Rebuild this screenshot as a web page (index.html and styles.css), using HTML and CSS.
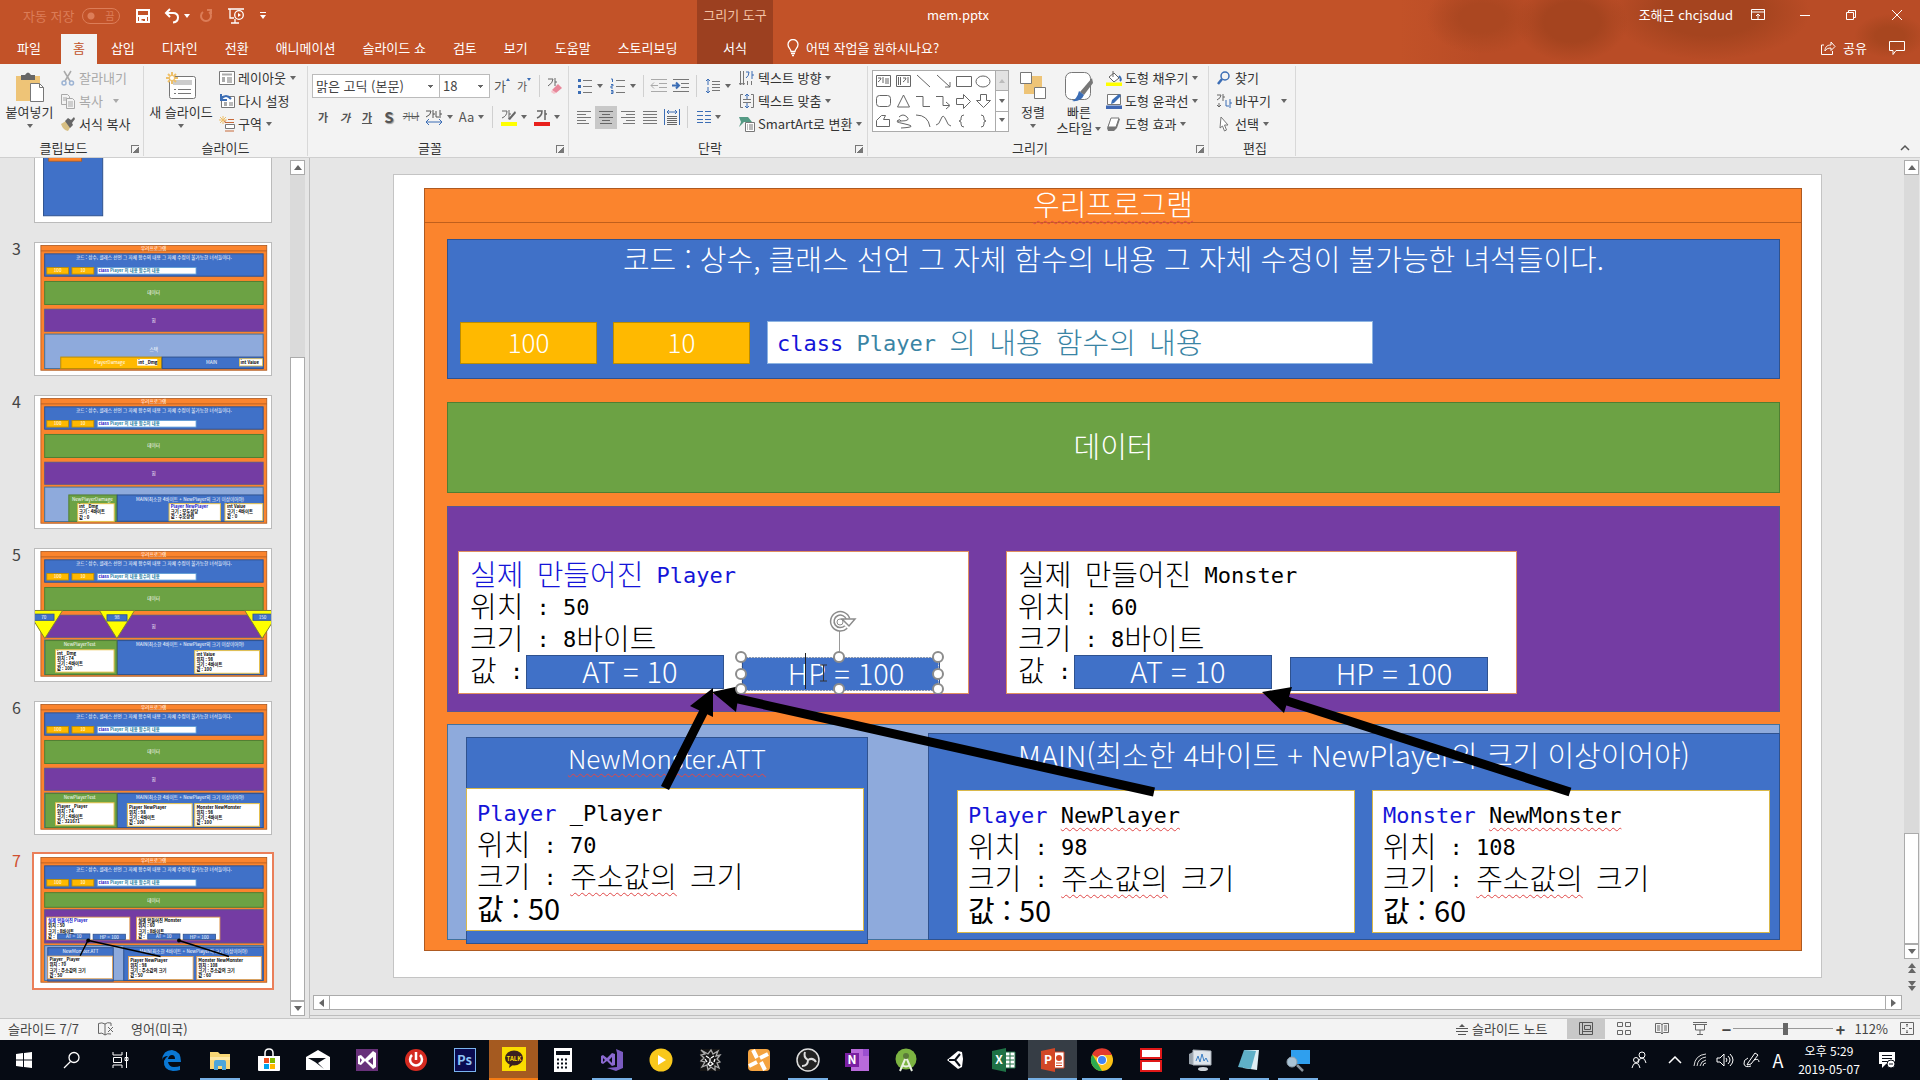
FILE: index.html
```html
<!DOCTYPE html>
<html lang="ko">
  <head>
    <meta charset="UTF-8" />
    <meta name="viewport" content="width=device-width, initial-scale=1.0" />
    <title>mem.pptx</title>
    <link rel="stylesheet" href="styles.css">
  </head>
  <body>
    <!-- Shared thumbnail art -->
    <svg class="defs" width="0" height="0" aria-hidden="true">
      <defs>
        <g id="th-base">
          <rect x="32" y="15" width="1374" height="759" fill="#fb842d" stroke="#ae5a21" stroke-width="5" />
          <path d="M32 48H1406" stroke="#ae5a21" stroke-width="5" />
          <rect x="55" y="66" width="1329" height="136" fill="#4071c8" stroke="#2f528f" stroke-width="6" />
          <g fill="#ffb900" stroke="#bc8c00" stroke-width="5">
            <rect x="68" y="149" width="132" height="40" />
            <rect x="221" y="149" width="133" height="40" />
          </g>
          <rect x="375" y="149" width="601" height="40" fill="#fff" stroke="#5b9bd5" stroke-width="5" />
          <g class="th-text">
            <text x="718" y="41">우리프로그램</text>
            <text x="720" y="96">코드 : 상수, 클래스 선언 그 자체 함수의 내용 그 자체 수정이 불가능한 녀석들이다.</text>
            <text x="134" y="179">100</text>
            <text x="287" y="179">10</text>
          </g>
          <text class="th-code" x="382" y="179" fill="#2b7fa5"><tspan fill="#1010c8">class</tspan> Player 의 내용 함수의 내용</text>
        </g>
        <g id="th-areas">
          <rect x="55" y="234" width="1329" height="140" fill="#6ca244" stroke="#507e32" stroke-width="6" />
          <rect x="55" y="403" width="1329" height="134" fill="#743ca3" stroke="#5a5590" stroke-width="6" />
          <rect x="55" y="554" width="1329" height="210" fill="#8eaadc" stroke="#41719c" stroke-width="6" />
          <text class="th-text" x="718" y="312">데이터</text>
          <text class="th-text" x="718" y="480">힙</text>
        </g>
        <g id="th-main">
          <rect x="497" y="557" width="887" height="207" fill="#4071c8" stroke="#2f528f" stroke-width="6" />
          <text class="th-text" x="940" y="590">MAIN(최소한 4바이트 + NewPlayer의 크기 이상이어야)</text>
        </g>
      </defs>
    </svg>

    <header class="titlebar">
      <div class="quick-access">
        <label class="autosave">자동 저장
          <input type="checkbox" class="autosave-box" />
          <span class="autosave-switch">끔</span>
        </label>
        <button class="qa-btn" aria-label="저장">
          <svg width="16" height="16" viewBox="0 0 16 16" fill="none" stroke="#fff" stroke-width="2"><path d="M2 2h12v12H2z" /><path d="M3 8h10M5 14v-4h6v4" /><path d="M6 12h1v2" stroke-width="1" /></svg>
        </button>
        <button class="qa-btn" aria-label="실행 취소">
          <svg width="16" height="16" viewBox="0 0 16 16" fill="none" stroke="#fff" stroke-width="2"><path d="M6 1L2 5l4 4" /><path d="M2 5h7q5 0 5 4.500t-5 5" /></svg>
          <span class="caret white"></span>
        </button>
        <button class="qa-btn dim" aria-label="다시 실행">
          <svg width="16" height="16" viewBox="0 0 16 16" fill="none" stroke="#dc7d58" stroke-width="2"><path d="M5 4a5 5 0 1 0 6 0" /><path d="M9 2h4v4" /></svg>
        </button>
        <button class="qa-btn" aria-label="처음부터">
          <svg width="18" height="16" viewBox="0 0 18 16" fill="none" stroke="#fff" stroke-width="1.300"><path d="M1 1h16M3 1v9h4M4 15h8M8 11v4" /><circle cx="12" cy="7" r="4.300" /><path d="M11 5l3 2-3 2z" fill="#fff" stroke="none" /></svg>
        </button>
        <button class="qa-btn" aria-label="빠른 실행 도구 모음 사용자 지정">
          <svg width="10" height="8" viewBox="0 0 10 8"><path d="M2 0h6v1H2zM2 3h6L5 7z" fill="#fff" /></svg>
        </button>
      </div>
      <div class="context-title">그리기 도구</div>
      <div class="title-right">
        <span class="file-name">mem.pptx</span>
        <div class="window-controls">
          <span class="account">조해근 chcjsdud</span>
          <button aria-label="리본 메뉴 표시 옵션"><svg width="14" height="12" viewBox="0 0 14 12" fill="none" stroke="#fff"><path d="M.5.5h13v10H.5zM.5 3h13M7 10V5M5 7l2-2 2 2" /></svg></button>
          <button aria-label="최소화"><svg width="12" height="12" viewBox="0 0 12 12" stroke="#fff"><path d="M1 6.500h10" /></svg></button>
          <button aria-label="이전 크기로 복원"><svg width="12" height="12" viewBox="0 0 12 12" fill="none" stroke="#fff"><path d="M1.500 3.500h7v7h-7zM3.500 3.500v-2h7v7h-2" /></svg></button>
          <button aria-label="닫기"><svg width="12" height="12" viewBox="0 0 12 12" stroke="#fff"><path d="M1 1l10 10M11 1L1 11" /></svg></button>
        </div>
      </div>

      <nav class="tabs">
        <button>파일</button>
        <button class="active">홈</button>
        <button>삽입</button>
        <button>디자인</button>
        <button>전환</button>
        <button>애니메이션</button>
        <button>슬라이드 쇼</button>
        <button>검토</button>
        <button>보기</button>
        <button>도움말</button>
        <button>스토리보딩</button>
      </nav>
      <button class="context-tab">서식</button>
      <div class="tabs-right">
        <button class="tell-me">
          <svg width="12" height="18" viewBox="0 0 12 18" fill="none" stroke="#fff" stroke-width="1.300"><path d="M4 12.500c0-3-3-3-3-7a5 5 0 0 1 10 0c0 4-3 4-3 7zM4 14.500h4M5 16.500h2" /></svg>
          어떤 작업을 원하시나요?
        </button>
        <button class="share">
          <svg width="15" height="14" viewBox="0 0 15 14" fill="none" stroke="#fff"><path d="M3 4H.500v9.500h11V10M4 10c0-4 2-6 6-6V1l4 4.500-4 4V7C7 7 5 8 4 10z" /></svg>
          공유
        </button>
        <button class="comment" aria-label="메모"><svg width="16" height="14" viewBox="0 0 16 14" fill="none" stroke="#fff"><path d="M.500.500h15v9H7l-3 4v-4H.500z" /></svg></button>
      </div>
    </header>

    <section class="ribbon">
      <div class="group g-clipboard">
        <div class="group-body">
          <button class="big">
            <svg width="30" height="32" viewBox="0 0 30 32"><path d="M1 5h24v25H1z" fill="#eec477" /><path d="M6 4h4q3-5 6 0h4v5H6z" fill="#666" /><path d="M15.500 12.500h9l4 4v14h-13z" fill="#fff" stroke="#777" /><path d="M24.500 12.500v4h4" fill="none" stroke="#777" /></svg>
            <span>붙여넣기</span><span class="caret"></span>
          </button>
          <div class="small-col">
            <button class="small off"><svg width="16" height="16" viewBox="0 0 16 16" fill="none" stroke="#a9a9a9" stroke-width="1.500"><path d="M4 1l6 10M11 1L5 11" /><circle cx="4" cy="13" r="2" stroke="#9db4d4" /><circle cx="11.500" cy="13" r="2" stroke="#9db4d4" /></svg>잘라내기</button>
            <button class="small off"><svg width="16" height="16" viewBox="0 0 16 16" fill="#f3f3f3" stroke="#a9a9a9"><path d="M1.500 1.500h6l2 2v8h-8zM3 5h4M3 7h4" /><path d="M6.500 5.500h6l2 2v8h-8zM8 9h5M8 11h5M8 13h5" /></svg>복사<span class="caret wide"></span></button>
            <button class="small"><svg width="16" height="16" viewBox="0 0 16 16"><path d="M1 8l5-3 5 5-3 5q-5-1-7-7z" fill="#d7bf83" /><path d="M5 5l3-3 3 2 3-3 1 2-3 4 1 2-3 3z" fill="#666" /></svg>서식 복사</button>
          </div>
        </div>
        <div class="group-foot"><span>클립보드</span><button class="launcher" aria-label="클립보드 옵션"></button></div>
      </div>

      <div class="group g-slides">
        <div class="group-body">
          <button class="big">
            <svg width="32" height="32" viewBox="0 0 32 32"><rect x="4.500" y="5.500" width="26" height="22" rx="2" fill="#fff" stroke="#777" /><path d="M8 9h19v5H8z" fill="#ccc" /><path d="M9 18.500h2M13 18.500h13M9 22.500h2M13 22.500h13" stroke="#777" /><path d="M7 1v12M1 7h12M3 3l8 8M11 3l-8 8" stroke="#eec06a" stroke-width="2" /><circle cx="7" cy="7" r="2" fill="#fff" /></svg>
            <span>새 슬라이드</span><span class="caret"></span>
          </button>
          <div class="small-col">
            <button class="small"><svg width="16" height="16" viewBox="0 0 16 16" fill="none" stroke="#777"><path d="M.500 1.500h15v13H.500z" fill="#fff" /><path d="M3 4.500h10" stroke-width="2" stroke="#aaa" /><path d="M3 7h3v5H3z" fill="#aaa" stroke="none" /><path d="M8 8h5M8 10h5M8 12h5" /></svg>레이아웃<span class="caret"></span></button>
            <button class="small"><svg width="16" height="16" viewBox="0 0 16 16" fill="none" stroke="#777"><path d="M2.500 3.500h13v11h-13z" fill="#fff" /><path d="M5 9h3v4H5z" fill="#aaa" stroke="none" /><path d="M10 10h4M10 12h4" /><path d="M2 1v6h6M2 6q5-6 10 0" stroke="#3b6db5" stroke-width="2" /></svg>다시 설정</button>
            <button class="small"><svg width="16" height="16" viewBox="0 0 16 16" fill="none"><path d="M4 0v8M0 4h8M1 1l6 6M7 1L1 7" stroke="#eec06a" /><path d="M9 3.500h6M15 6.500H6v-2M6 15h9" stroke="#c76a3a" /><path d="M6.500 8.500h9v4h-9z" fill="#fff" stroke="#777" /></svg>구역<span class="caret"></span></button>
          </div>
        </div>
        <div class="group-foot"><span>슬라이드</span></div>
      </div>

      <div class="group g-font">
        <div class="group-body rows">
          <div class="tool-row">
            <select class="font-name" aria-label="글꼴"><option>맑은 고딕 (본문)</option></select>
            <select class="font-size" aria-label="글꼴 크기"><option>18</option></select>
            <button class="tool" aria-label="글꼴 크기 크게">가<i class="tip up"></i></button>
            <button class="tool sm" aria-label="글꼴 크기 작게">가<i class="tip down"></i></button>
            <span class="sep"></span>
            <button class="tool" aria-label="모든 서식 지우기"><svg width="18" height="18" viewBox="0 0 18 18"><path d="M2 2h5q0 4-5 7M9 1v8M9 5h2" fill="none" stroke="#666" /><path d="M6 13l6-6 4 4-6 5z" fill="#e8879a" /><path d="M6 13l4 3-2 1-3-2z" fill="#f5c3cb" /></svg></button>
          </div>
          <div class="tool-row indent">
            <button class="tool sm bold">가</button>
            <button class="tool sm bold italic">가</button>
            <button class="tool sm bold under">가</button>
            <button class="tool shadow">S</button>
            <button class="tool xs strike">가나</button>
            <button class="tool split"><svg width="18" height="16" viewBox="0 0 18 16" fill="none"><path d="M1 2h5q0 4-5 6M8 1v8M8 5h2M11 2v6h3M15 1v8M15 5h2" stroke="#555" /><path d="M1 13h16M4 10l-3 3 3 3M14 10l3 3-3 3" stroke="#3b6db5" /></svg><span class="caret"></span></button>
            <button class="tool split">Aa<span class="caret"></span></button>
            <span class="sep"></span>
            <button class="tool split" aria-label="텍스트 강조 색"><svg width="16" height="18" viewBox="0 0 16 18"><path d="M1 3h5q0 5-5 7M8 2v9M8 6h2" fill="none" stroke="#666" /><path d="M7 11l7-8 1 2-6 7z" fill="#666" /><path d="M0 14h16v4H0z" fill="#ff0" /></svg><span class="caret"></span></button>
            <button class="tool split" aria-label="글꼴 색"><svg width="16" height="18" viewBox="0 0 16 18"><path d="M3 3h5q0 5-5 7M11 2v10M11 6h2" fill="none" stroke="#666" stroke-width="1.500" /><path d="M0 14h16v4H0z" fill="#e8201c" /></svg><span class="caret"></span></button>
          </div>
        </div>
        <div class="group-foot"><span>글꼴</span><button class="launcher" aria-label="글꼴 옵션"></button></div>
      </div>

      <div class="group g-paragraph">
        <div class="group-body">
          <div class="rows">
            <div class="tool-row">
              <button class="tool split" aria-label="글머리 기호"><svg width="16" height="16" viewBox="0 0 16 16"><path d="M1 1h3v3H1zM1 7h3v3H1zM1 13h3v3H1z" fill="#3b6db5" /><path d="M6 2.500h9M6 8.500h9M6 14.500h9" stroke="#777" /></svg><span class="caret"></span></button>
              <button class="tool split" aria-label="번호 매기기"><svg width="16" height="16" viewBox="0 0 16 16" fill="none"><path d="M1 1h1.500v3M1 6.500h2v1.500H1v2h2M1 12.500h2v3H1M1 14h2" stroke="#3b6db5" /><path d="M6 2.500h9M6 8.500h9M6 14.500h9" stroke="#777" /></svg><span class="caret"></span></button>
              <span class="sep"></span>
              <button class="tool" aria-label="목록 수준 줄임"><svg width="18" height="14" viewBox="0 0 18 14" fill="none" stroke="#aaa"><path d="M1 .500h16M9 4.500h8M9 8.500h8M1 12.500h16M1 6.500h7M4 3.500l-3 3 3 3" /></svg></button>
              <button class="tool" aria-label="목록 수준 늘림"><svg width="18" height="14" viewBox="0 0 18 14" fill="none" stroke="#777"><path d="M1 .500h16M9 4.500h8M9 8.500h8M1 12.500h16" /><path d="M0 6.500h7M4 3.500l3 3-3 3" stroke="#3b6db5" stroke-width="2" /></svg></button>
              <span class="sep"></span>
              <button class="tool split" aria-label="줄 간격"><svg width="16" height="16" viewBox="0 0 16 16" fill="none"><path d="M3 1v6M1 3l2-2 2 2M3 9v6M1 13l2 2 2-2" stroke="#3b6db5" /><path d="M7 3.500h8M7 6.500h8M7 9.500h8M7 12.500h8" stroke="#777" /></svg><span class="caret"></span></button>
            </div>
            <div class="tool-row">
              <button class="tool" aria-label="왼쪽 맞춤"><svg width="14" height="13" viewBox="0 0 14 13" stroke="#777"><path d="M0 .500h14M0 3.500h9M0 6.500h14M0 9.500h9M0 12.500h12" /></svg></button>
              <button class="tool on" aria-label="가운데 맞춤"><svg width="14" height="13" viewBox="0 0 14 13" stroke="#666"><path d="M0 .500h14M3 3.500h8M0 6.500h14M3 9.500h8M1 12.500h12" /></svg></button>
              <button class="tool" aria-label="오른쪽 맞춤"><svg width="14" height="13" viewBox="0 0 14 13" stroke="#777"><path d="M0 .500h14M5 3.500h9M0 6.500h14M5 9.500h9M2 12.500h12" /></svg></button>
              <button class="tool" aria-label="양쪽 맞춤"><svg width="14" height="13" viewBox="0 0 14 13" stroke="#777"><path d="M0 .500h14M0 3.500h14M0 6.500h14M0 9.500h14M0 12.500h14" /></svg></button>
              <button class="tool" aria-label="균등 분할"><svg width="16" height="16" viewBox="0 0 16 16" fill="none"><path d="M.500 0v16M15.500 0v16M3 3h10M5 1L3 3l2 2M11 1l2 2-2 2" stroke="#3b6db5" /><path d="M3 7.500h10M3 9.500h10M3 11.500h10M3 13.500h10M3 15.500h10" stroke="#666" /></svg></button>
              <span class="sep"></span>
              <button class="tool split" aria-label="단"><svg width="14" height="12" viewBox="0 0 14 12" stroke="#3b6db5"><path d="M0 .500h6M0 4.500h6M0 8.500h6M0 11.500h6M8 .500h6M8 4.500h6M8 8.500h6M8 11.500h6" /></svg><span class="caret"></span></button>
            </div>
          </div>
          <div class="small-col">
            <button class="small"><svg width="16" height="16" viewBox="0 0 16 16" fill="none"><path d="M1.500 1v14M4.500 1v14M8.500 11v4M12.500 11v4M0 13l1.500 2L3 13M3.500 13l1 2 1-2" stroke="#777" /><path d="M7 2h3q0 4-3 6M13 1v8M13 5h2" stroke="#3b6db5" /></svg>텍스트 방향<span class="caret"></span></button>
            <button class="small"><svg width="16" height="16" viewBox="0 0 16 16" fill="none"><path d="M4 1.500H1.500v13H4M12 1.500h2.500v13H12M4 6.500h8M4 9.500h8" stroke="#777" /><path d="M8 1v5M6 3l2-2 2 2M8 10v5M6 13l2 2 2-2" stroke="#3b6db5" /></svg>텍스트 맞춤<span class="caret"></span></button>
            <button class="small"><svg width="16" height="16" viewBox="0 0 16 16"><path d="M0 1h9l4 5H5L0 11l2-5z" fill="#549a84" /><path d="M6.500 6.500h9v9h-9z" fill="#fff" stroke="#777" /><path d="M8 9h1M10 9h4M8 11h1M10 11h4M8 13h1M10 13h4" stroke="#777" /></svg>SmartArt로 변환<span class="caret"></span></button>
          </div>
        </div>
        <div class="group-foot"><span>단락</span><button class="launcher" aria-label="단락 옵션"></button></div>
      </div>

      <div class="group g-drawing">
        <div class="group-body">
          <div class="gallery">
            <svg class="gallery-shapes" width="122" height="60" viewBox="0 0 122 60" fill="none" stroke="#666">
              <path d="M3.500 4.500h14v11h-14zM5 7h3q0 2-3 4M10 6v6M12 8h4M12 10h4M12 12h4" />
              <path d="M23.500 4.500h14v11h-14zM25.500 6v8M27.500 6v8M30 7h3q0 2-3 4M35 6v6" />
              <path d="M44 4l13 12M64 4l13 12M77 11v5h-5M83.500 5.500h15v10h-15z" /><ellipse cx="110" cy="10.500" rx="7" ry="5.500" />
              <rect x="3.500" y="24.500" width="14" height="11" rx="3" /><path d="M30.500 24l6 12h-12zM43 25.500h7v10h7M63 25.500h7v9h6M73 31l4 3.500-4 3.500M83.500 27.500h7v-4l7 7-7 7v-4h-7zM107.500 23.500h6v6h4l-7 7-7-7h4z" />
              <path d="M3.500 55.500v-6l5-5h4l-2 4h6v7zM26 46q4-4 8 0t-6 4 4 3-4 4M24 50q3-3 4 0M43 44q12 0 14 12M63 54q3 0 5-6t5 1q2 6 5 6M91 44q-3 0-3 3v2l-2 1 2 1v2q0 3 3 3M108 44q3 0 3 3v2l2 1-2 1v2q0 3-3 3" />
            </svg>
            <div class="gallery-scroll"><button class="off" aria-label="위로"><i class="tri up"></i></button><button aria-label="아래로"><i class="tri"></i></button><button aria-label="자세히"><i class="tri more"></i></button></div>
          </div>
          <button class="big arrange">
            <svg width="28" height="28" viewBox="0 0 28 28"><path d="M12 5h11v11H12zM5 13h10v10H5z" fill="#eec477" /><path d="M1.500 1.500h11v11h-11zM15.500 16.500h11v11h-11z" fill="#fff" stroke="#777" /></svg>
            <span>정렬</span><span class="caret"></span>
          </button>
          <button class="big style">
            <svg width="30" height="32" viewBox="0 0 30 32"><rect x="1.500" y="1.500" width="25" height="27" rx="6" fill="#fff" stroke="#777" /><path d="M28 7l1 5-9 12-4-3z" fill="#777" /><path d="M15 20l5 4q-3 7-12 6 5-2 7-10z" fill="#3b6db5" /></svg>
            <span>빠른</span><span>스타일<i class="caret"></i></span>
          </button>
          <div class="small-col">
            <button class="small"><svg width="16" height="16" viewBox="0 0 16 16"><path d="M7 1v6M3 7l5-4 5 5-5 4z" fill="#fff" stroke="#666" /><path d="M13 6q3 3 1 5" fill="none" stroke="#3b6db5" stroke-width="2" /><path d="M0 12.500h16V16H0z" fill="#ff0" /></svg>도형 채우기<span class="caret"></span></button>
            <button class="small"><svg width="16" height="16" viewBox="0 0 16 16"><path d="M1.500 1.500h13v10h-13z" fill="#fff" stroke="#777" /><path d="M5 11l1-4 7-6 2 2-7 7z" fill="#3b6db5" /><path d="M0 12.500h16V16H0z" fill="#4068b4" /></svg>도형 윤곽선<span class="caret"></span></button>
            <button class="small"><svg width="16" height="16" viewBox="0 0 16 16"><path d="M5 3h9l-3 9-3 3H2l-1-3z" fill="#777" /><path d="M5 2h8l-3 9H2z" fill="#fff" stroke="#777" /></svg>도형 효과<span class="caret"></span></button>
          </div>
        </div>
        <div class="group-foot"><span>그리기</span><button class="launcher" aria-label="도형 서식"></button></div>
      </div>

      <div class="group g-edit">
        <div class="group-body">
          <div class="small-col">
            <button class="small"><svg width="16" height="16" viewBox="0 0 16 16" fill="none"><circle cx="9" cy="6" r="4" stroke="#3b6db5" stroke-width="1.500" /><path d="M6 9l-4 5" stroke="#3b6db5" stroke-width="2.500" /></svg>찾기</button>
            <button class="small"><svg width="16" height="16" viewBox="0 0 16 16" fill="none"><path d="M1 2h4q0 3-4 5M7 1v7M7 4h2M3 10v4M1 12l2 2 2-2" stroke="#666" /><path d="M10 7v6h3M14 6v9M14 10h2" stroke="#3b6db5" /></svg>바꾸기<span class="caret wide"></span></button>
            <button class="small"><svg width="16" height="16" viewBox="0 0 16 16"><path d="M5 1l7 8H8.500l2 5-2 1-2-5L4 12z" fill="#fff" stroke="#777" /></svg>선택<span class="caret"></span></button>
          </div>
        </div>
        <div class="group-foot"><span>편집</span></div>
      </div>
      <button class="collapse" aria-label="리본 메뉴 축소"><svg width="10" height="7" viewBox="0 0 10 7"><path d="M1 6l4-4 4 4" fill="none" stroke="#555" stroke-width="1.500" /></svg></button>
    </section>

    <main class="workspace">
      <aside class="thumb-panel">
        <ol class="thumbs">
          <li>
            <span class="num"></span>
            <svg class="thumb" viewBox="0 0 1428 803"><rect x="48" y="30" width="360" height="735" fill="#4071c8" stroke="#2f528f" stroke-width="6" /><rect x="80" y="376" width="200" height="57" fill="#fb842d" stroke="#ae5a21" stroke-width="5" /></svg>
          </li>
          <li>
            <span class="num">3</span>
            <svg class="thumb" viewBox="0 0 1428 803">
              <use href="#th-base" /><use href="#th-areas" />
              <text class="th-text" x="718" y="660">스택</text>
              <rect x="153" y="694" width="613" height="70" fill="#ffb900" stroke="#bc8c00" stroke-width="6" />
              <rect x="770" y="694" width="614" height="70" fill="#4071c8" stroke="#2f528f" stroke-width="6" />
              <text class="th-text" x="450" y="738">PlayerDamage</text><text class="th-text" x="1070" y="738">MAIN</text>
              <rect x="618" y="706" width="122" height="40" fill="#fff" /><rect x="1240" y="704" width="140" height="44" fill="#fff" stroke="#e6c14a" stroke-width="5" />
              <text class="th-code" x="624" y="738">int _Dmg</text><text class="th-code" x="1246" y="738">int Value</text>
            </svg>
          </li>
          <li>
            <span class="num">4</span>
            <svg class="thumb" viewBox="0 0 1428 803">
              <use href="#th-base" /><use href="#th-areas" />
              <rect x="202" y="602" width="292" height="160" fill="#6ca244" stroke="#507e32" stroke-width="6" />
              <rect x="497" y="602" width="887" height="160" fill="#4071c8" stroke="#2f528f" stroke-width="6" />
              <text class="th-text" x="345" y="636">NewPlayerDamage</text><text class="th-text" x="940" y="636">MAIN(최소한 4바이트 + NewPlayer의 크기 이상이어야)</text>
              <g fill="#fff" stroke="#e6c14a" stroke-width="6"><rect x="256" y="655" width="222" height="108" /><rect x="812" y="655" width="312" height="104" /><rect x="1152" y="655" width="230" height="104" /></g>
              <g class="th-code"><text x="264" y="684">int _Dmg</text><text x="264" y="714">크기 : 4바이트</text><text x="264" y="746">값 : 0</text><text x="822" y="680" fill="#1010c8">Player NewPlayer</text><text x="822" y="712">크기 : 모두상당</text><text x="822" y="742">값 : 수호상령</text><text x="1164" y="680">int Value</text><text x="1164" y="712">크기 : 4바이트</text><text x="1164" y="742">값 : 0</text></g>
            </svg>
          </li>
          <li>
            <span class="num">5</span>
            <svg class="thumb" viewBox="0 0 1428 803">
              <use href="#th-base" /><use href="#th-areas" /><use href="#th-main" />
              <rect x="58" y="557" width="436" height="207" fill="#6ca244" stroke="#507e32" stroke-width="6" />
              <text class="th-text" x="268" y="590">NewPlayerTest</text>
              <g fill="#ff0" stroke="#7f7f30" stroke-width="6"><path d="M-50 374H164L56 544zM388 374H602L494 544zM1272 374H1486L1378 544z" /></g>
              <g fill="#4071c8" stroke="#2f528f" stroke-width="5"><rect x="-10" y="396" width="122" height="38" /><rect x="434" y="400" width="122" height="38" /><rect x="1322" y="396" width="122" height="38" /></g>
              <g class="th-text"><text x="50" y="424">70</text><text x="495" y="428">98</text><text x="1380" y="424">150</text></g>
              <g fill="#fff" stroke="#e6c14a" stroke-width="6"><rect x="121" y="613" width="356" height="136" /><rect x="968" y="618" width="394" height="138" /></g>
              <g class="th-code"><text x="130" y="644">int _Dmg</text><text x="130" y="676">위치 : 74</text><text x="130" y="708">크기 : 4바이트</text><text x="130" y="738">값 : 100</text><text x="978" y="648">int Value</text><text x="978" y="680">위치 : 98</text><text x="978" y="712">크기 : 4바이트</text><text x="978" y="744">값 : 100</text></g>
            </svg>
          </li>
          <li>
            <span class="num">6</span>
            <svg class="thumb" viewBox="0 0 1428 803">
              <use href="#th-base" /><use href="#th-areas" /><use href="#th-main" />
              <rect x="58" y="557" width="436" height="207" fill="#6ca244" stroke="#507e32" stroke-width="6" />
              <text class="th-text" x="268" y="590">NewPlayerTest</text>
              <g fill="#fff" stroke="#e6c14a" stroke-width="6"><rect x="121" y="613" width="356" height="136" /><rect x="558" y="618" width="394" height="138" /><rect x="968" y="618" width="394" height="138" /></g>
              <g class="th-code"><text x="130" y="644">Player _Player</text><text x="130" y="676">위치 : 74</text><text x="130" y="708">크기 : 4바이트</text><text x="130" y="738">값 : 321671</text><text x="568" y="648">Player NewPlayer</text><text x="568" y="680">위치 : 98</text><text x="568" y="712">크기 : 4바이트</text><text x="568" y="744">값 : 100</text><text x="978" y="648">Monster NewMonster</text><text x="978" y="680">위치 : 98</text><text x="978" y="712">크기 : 4바이트</text><text x="978" y="744">값 : 100</text></g>
            </svg>
          </li>
          <li class="selected">
            <span class="num">7</span>
            <svg class="thumb" viewBox="0 0 1428 803">
              <use href="#th-base" />
              <rect x="55" y="229" width="1329" height="89" fill="#6ca244" stroke="#507e32" stroke-width="6" />
              <text class="th-text" x="718" y="284">데이터</text>
              <rect x="55" y="333" width="1329" height="202" fill="#743ca3" stroke="#5a5590" stroke-width="6" />
              <rect x="55" y="551" width="1329" height="212" fill="#8eaadc" stroke="#41719c" stroke-width="6" />
              <rect x="74" y="564" width="398" height="203" fill="#4071c8" stroke="#2f528f" stroke-width="6" />
              <rect x="536" y="560" width="848" height="203" fill="#4071c8" stroke="#2f528f" stroke-width="6" />
              <text class="th-text" x="273" y="594">NewMonster.ATT</text><text class="th-text" x="960" y="594">MAIN(최소한 4바이트 + NewPlayer의 크기 이상이어야)</text>
              <g fill="#fff" stroke="#e6a04a" stroke-width="5"><rect x="66" y="378" width="507" height="138" /><rect x="614" y="378" width="507" height="138" /><rect x="74" y="615" width="394" height="138" /><rect x="565" y="617" width="393" height="140" /><rect x="980" y="617" width="393" height="140" /></g>
              <g fill="#4071c8" stroke="#2f528f" stroke-width="5"><rect x="134" y="480" width="196" height="32" /><rect x="350" y="482" width="196" height="32" /><rect x="682" y="480" width="196" height="32" /><rect x="898" y="482" width="196" height="32" /></g>
              <g class="th-text"><text x="232" y="506">AT = 10</text><text x="448" y="508">HP = 100</text><text x="780" y="506">AT = 10</text><text x="996" y="508">HP = 100</text></g>
              <g class="th-code"><text x="76" y="410" fill="#1010c8">실제 만들어진 Player</text><text x="76" y="440">위치 : 50</text><text x="76" y="472">크기 : 8바이트</text><text x="76" y="504">값 :</text><text x="624" y="410">실제 만들어진 Monster</text><text x="624" y="440">위치 : 60</text><text x="624" y="472">크기 : 8바이트</text><text x="624" y="504">값 :</text><text x="84" y="646">Player _Player</text><text x="84" y="678">위치 : 70</text><text x="84" y="710">크기 : 주소값의 크기</text><text x="84" y="742">값 : 50</text><text x="575" y="648">Player NewPlayer</text><text x="575" y="680">위치 : 98</text><text x="575" y="712">크기 : 주소값의 크기</text><text x="575" y="744">값 : 50</text><text x="990" y="648">Monster NewMonster</text><text x="990" y="680">위치 : 108</text><text x="990" y="712">크기 : 주소값의 크기</text><text x="990" y="744">값 : 60</text></g>
              <path d="M271 613L318 520M760 617L322 520M1176 617L872 520" stroke="#000" stroke-width="9" /><circle cx="320" cy="520" r="12" /><circle cx="872" cy="520" r="12" />
            </svg>
          </li>
        </ol>
        <div class="vscroll">
          <button aria-label="위로 스크롤"><i class="tri up"></i></button>
          <div class="track-gap"></div>
          <div class="bar"></div>
          <button aria-label="아래로 스크롤"><i class="tri"></i></button>
        </div>
      </aside>

      <section class="editor">
        <div class="stage">
          <article class="slide">
            <div class="shape program"><h1 class="program-name"><span class="misspelt">우리프로그램</span></h1></div>
            <div class="shape code-area">코드 : 상수, 클래스 선언 그 자체 함수의 내용 그 자체 수정이 불가능한 녀석들이다.</div>
            <div class="shape const const-a">100</div>
            <div class="shape const const-b">10</div>
            <div class="shape class-box code"><p><span class="kw">class</span> Player <span class="ko">의</span> <span class="ko">내용</span> <span class="ko">함수의</span> <span class="ko">내용</span></p></div>
            <div class="shape data-area">데이터</div>
            <div class="shape heap-area"></div>
            <div class="shape stack-area"></div>

            <div class="shape object code object-player">
              <p class="kw"><span class="ko">실제</span> <span class="ko">만들어진</span> Player</p>
              <p><span class="ko">위치</span> : 50</p>
              <p><span class="ko">크기</span> : 8<span class="ko">바이트</span></p>
              <p><span class="ko">값</span> :</p>
            </div>
            <div class="shape object code object-monster">
              <p><span class="ko">실제</span> <span class="ko">만들어진</span> Monster</p>
              <p><span class="ko">위치</span> : 60</p>
              <p><span class="ko">크기</span> : 8<span class="ko">바이트</span></p>
              <p><span class="ko">값</span> :</p>
            </div>
            <div class="shape field at player-at">AT = 10</div>
            <div class="shape field at monster-at">AT = 10</div>
            <div class="shape field hp monster-hp">HP = 100</div>

            <div class="shape frame frame-att"><span class="misspelt">NewMonster.ATT</span></div>
            <div class="shape frame frame-main">MAIN(최소한 4바이트 + NewPlayer의 크기 이상이어야)</div>

            <div class="shape var code var-att">
              <p><span class="kw">Player</span> _Player</p>
              <p><span class="ko">위치</span> : 70</p>
              <p><span class="ko">크기</span> : <span class="ko misspelt">주소값의</span> <span class="ko">크기</span></p>
              <p class="value">값 : 50</p>
            </div>
            <div class="shape var code var-player">
              <p><span class="kw">Player</span> <span class="misspelt">NewPlayer</span></p>
              <p><span class="ko">위치</span> : 98</p>
              <p><span class="ko">크기</span> : <span class="ko misspelt">주소값의</span> <span class="ko">크기</span></p>
              <p class="value">값 : 50</p>
            </div>
            <div class="shape var code var-monster">
              <p><span class="kw">Monster</span> <span class="misspelt">NewMonster</span></p>
              <p><span class="ko">위치</span> : 108</p>
              <p><span class="ko">크기</span> : <span class="ko misspelt">주소값의</span> <span class="ko">크기</span></p>
              <p class="value">값 : 60</p>
            </div>

            <svg class="arrows" width="1428" height="803" viewBox="0 0 1428 803">
              <path d="M271 613L312 532M760 617L340 523M1176 617L890 525" stroke="#000" stroke-width="9" />
              <path d="M319 513L319 542L296 531zM318 517L346 511L342 537zM868 517L898 512L890 538z" />
            </svg>

            <div class="shape field hp player-hp">HP = 100
              <svg class="selection" width="220" height="90" viewBox="0 0 220 90">
                <path d="M108.500 26v22" stroke="#999" />
                <g fill="none" stroke="#8c8c8c" stroke-width="5"><path d="M115 23a8 8 0 1 1 2-8" /></g>
                <g fill="none" stroke="#fff" stroke-width="2"><path d="M115 23a8 8 0 1 1 2-8" /></g>
                <path d="M111 15h13l-6 7z" fill="#fff" stroke="#8c8c8c" stroke-width="1.500" />
                <circle cx="109" cy="18" r="3" fill="none" stroke="#8c8c8c" />
                <path d="M10.500 53.500h197v33h-197z" fill="none" stroke="#ddd" stroke-dasharray="2 1" />
                <g fill="#fff" stroke="#8c8c8c" stroke-width="2"><circle cx="10" cy="53" r="5" /><circle cx="108" cy="53" r="5" /><circle cx="207" cy="53" r="5" /><circle cx="10" cy="70" r="5" /><circle cx="207" cy="70" r="5" /><circle cx="10" cy="85" r="5" /><circle cx="108" cy="85" r="5" /><circle cx="207" cy="85" r="5" /></g>
                <path d="M74.500 49v36" stroke="#222" /><path d="M89 61h7M89 77h7M92.500 61v16" stroke="#333" />
              </svg>
            </div>
          </article>
        </div>
        <div class="vscroll right">
          <button aria-label="위로 스크롤"><i class="tri up"></i></button>
          <div class="track-gap"></div>
          <div class="bar"></div>
          <button aria-label="아래로 스크롤"><i class="tri"></i></button>
          <button class="jump" aria-label="이전 슬라이드"><i class="tri up"></i><i class="tri up"></i></button>
          <button class="jump" aria-label="다음 슬라이드"><i class="tri"></i><i class="tri"></i></button>
        </div>
        <div class="hscroll">
          <button aria-label="왼쪽으로 스크롤"><i class="tri left"></i></button>
          <div class="bar"></div>
          <button aria-label="오른쪽으로 스크롤"><i class="tri rightward"></i></button>
        </div>
      </section>
    </main>

    <footer class="statusbar">
      <span class="page-no">슬라이드 7/7</span>
      <button class="st-proof" aria-label="맞춤법 검사"><svg width="16" height="14" viewBox="0 0 16 14" fill="none" stroke="#666"><path d="M7 2Q4 0 .500 1.500v10Q4 10 7 13zM7 2q2-2 6-1v3M7 13q2-2 6-1M10 5l5 5M15 5l-5 5" /></svg></button>
      <button class="st-lang">영어(미국)</button>
      <div class="st-right">
        <button class="notes"><svg width="12" height="12" viewBox="0 0 12 12"><path d="M3 4h6L6 1zM0 5h12v1H0zM0 8h12v1H0zM2 11h8v1H2z" fill="#555" /></svg>슬라이드 노트</button>
        <button class="view on" aria-label="기본"><svg width="14" height="13" viewBox="0 0 14 13" fill="none" stroke="#555"><path d="M.500.500h13v12H.500zM3.500.500v12M5.500 3.500h6v4h-6zM4 9.500h9" /></svg></button>
        <button class="view" aria-label="여러 슬라이드"><svg width="14" height="13" viewBox="0 0 14 13" fill="none" stroke="#666"><path d="M.500.500h5v4h-5zM8.500.500h5v4h-5zM.500 8.500h5v4h-5zM8.500 8.500h5v4h-5z" /></svg></button>
        <button class="view" aria-label="읽기용 보기"><svg width="14" height="13" viewBox="0 0 14 13" fill="none" stroke="#666"><path d="M.500 1.500h5l1.500 1 1.500-1h5v9h-5L7 12l-1.500-1.500h-5zM7 2v10M2 4h3M2 6h3M2 8h3M9 4h3M9 6h3M9 8h3" /></svg></button>
        <button class="view" aria-label="슬라이드 쇼"><svg width="14" height="13" viewBox="0 0 14 13" fill="none" stroke="#666"><path d="M0 .500h14M0 2.500h14M2.500 3v5h9V3M7 8v4M4 12.500h6" /></svg></button>
        <button class="zoom-step" aria-label="축소">−</button>
        <input class="zoom" type="range" min="0" max="100" value="52" aria-label="확대/축소" />
        <button class="zoom-step" aria-label="확대">+</button>
        <button class="zoom-value">112%</button>
        <button class="fit" aria-label="창에 맞춤"><svg width="14" height="13" viewBox="0 0 14 13" fill="none" stroke="#666"><path d="M.500.500h13v12H.500zM7 2v3M7 8v3M2 6.500h3M9 6.500h3M6 3l1-1 1 1M6 10l1 1 1-1" /></svg></button>
      </div>
    </footer>

    <nav class="taskbar">
      <button class="sys" aria-label="시작"><svg width="18" height="18" viewBox="0 0 18 18" fill="#fff"><path d="M1 3l7-1v6.500H1zM9 2l8-1v7.500H9zM1 9.500h7V16l-7-1zM9 9.500h8V17l-8-1z" /></svg></button>
      <button class="sys" aria-label="검색"><svg width="18" height="18" viewBox="0 0 18 18" fill="none" stroke="#fff" stroke-width="1.300"><circle cx="11" cy="6.500" r="5" /><path d="M7.500 10.500L1 17" /></svg></button>
      <button class="sys" aria-label="작업 보기"><svg width="18" height="18" viewBox="0 0 18 18" fill="none" stroke="#fff"><path d="M2 1v3h9V1M2.500 6.500h8v5h-8zM2 17v-3h9v3M15.500 1v16M14 6.500h3v3h-3z" /></svg></button>
      <button class="app first" aria-label="Edge"><svg width="22" height="22" viewBox="0 0 22 22"><path d="M2 11Q3 1 12 1q9 1 9 12H8q1 5 6 5 4 0 6-1v4q-3 1-7 1Q3 21 4 12q1-3 4-5-5 0-6 4zm6-1h7q0-4-3-4T8 10z" fill="#0a78d4" /></svg></button>
      <button class="app run" aria-label="파일 탐색기"><svg width="24" height="22" viewBox="0 0 24 22"><path d="M2 3h8l2 2h10v15H2z" fill="#f8d775" /><path d="M2 8h20v3H2z" fill="#ffe9a6" /><path d="M6 13q0-2 2-2h8q2 0 2 2v8h-4v-4h-4v4H6z" fill="#4ba5d9" /></svg></button>
      <button class="app" aria-label="Store"><svg width="24" height="24" viewBox="0 0 24 24"><path d="M1 8h22v14q0 1-1 1H2q-1 0-1-1z" fill="#fff" /><path d="M8 9V5q0-4 4-4t4 4v4" fill="none" stroke="#fff" stroke-width="1.500" /><path d="M7 10h5v5H7z" fill="#f25022" /><path d="M13 10h5v5h-5z" fill="#7fba00" /><path d="M7 16h5v5H7z" fill="#00a4ef" /><path d="M13 16h5v5h-5z" fill="#ffb900" /></svg></button>
      <button class="app" aria-label="메일"><svg width="24" height="20" viewBox="0 0 24 20"><path d="M12 0l12 7v13H0V7z" fill="#fff" /><path d="M2 8h18l-8 5 6 6-9-7z" fill="#0a0f18" /></svg></button>
      <button class="app" aria-label="Visual Studio"><svg width="22" height="22" viewBox="0 0 22 22"><path d="M0 0h22v22H0z" fill="#68317a" /><path d="M2 7l3-1 4 4 8-8 3 2v14l-3 2-8-8-4 4-3-1zm2 2v5l2-3zm13-1l-5 4 5 4z" fill="#fff" /></svg></button>
      <button class="app" aria-label="전원"><svg width="22" height="22" viewBox="0 0 22 22"><circle cx="11" cy="11" r="11" fill="#d42a20" /><path d="M7 6a6 6 0 1 0 8 0M11 3v8" fill="none" stroke="#fff" stroke-width="2.500" /></svg></button>
      <button class="app" aria-label="Photoshop"><span class="ps">Ps</span></button>
      <button class="app talk" aria-label="KakaoTalk"><svg width="24" height="24" viewBox="0 0 24 24"><rect width="24" height="24" fill="#fadc00" /><ellipse cx="12" cy="11" rx="9" ry="7.500" fill="#3a2020" /><path d="M8 16l-1 5 5-4z" fill="#3a2020" /><text x="12" y="14" text-anchor="middle" class="talk-text">TALK</text></svg></button>
      <button class="app" aria-label="계산기"><svg width="18" height="24" viewBox="0 0 18 24"><path d="M0 0h18v24H0z" fill="#fff" /><path d="M2 3h14v4H2z" fill="#0a0f18" /><path d="M3 11.500h12M3 15.500h12M3 19.500h12" stroke="#0a0f18" stroke-width="2" stroke-dasharray="2" /></svg></button>
      <button class="app run" aria-label="Visual Studio 2017"><svg width="24" height="24" viewBox="0 0 24 24"><path d="M16 1l7 3v16l-7 3-9-3 10-1V5z" fill="#7a5bc0" /><path d="M1 8l2-1 4 3 5-5 3 1v11l-3 1-5-5-4 3-2-1zm2 2v4l2-2zm9-1l-3 3 3 3z" fill="#8b6ad1" /></svg></button>
      <button class="app" aria-label="팟플레이어"><svg width="24" height="24" viewBox="0 0 24 24"><circle cx="12" cy="12" r="11.500" fill="#f8c81c" /><path d="M9 7l8 5-8 5z" fill="#fff" /></svg></button>
      <button class="app" aria-label="lion"><svg width="24" height="24" viewBox="0 0 24 24" fill="none" stroke="#aaa" stroke-width="1.300"><path d="M2 1h20v22H2z" fill="#151515" stroke="none" /><path d="M3 2l4 4-4 1 3 3-3 3 4 1-3 5 5-2 1 5 3-3 4 3v-4l4 2-2-5 3-1-3-3 3-4-4 1 2-5-5 3-2-4-3 4z" /><path d="M8 8l3 2M16 8l-3 2M12 10v4l-2 2 2 2 3-2-2-2M7 11l2 3M17 11l-1 3" stroke="#fff" /></svg></button>
      <button class="app" aria-label="xampp"><svg width="22" height="22" viewBox="0 0 22 22"><rect width="22" height="22" rx="4" fill="#f4a340" /><path d="M5 1l4 8M20 5l-8 4M17 21l-4-8M1 17l8-4" stroke="#fff" stroke-width="4" /></svg></button>
      <button class="app run" aria-label="OBS"><svg width="24" height="24" viewBox="0 0 24 24" fill="none" stroke="#ddd"><circle cx="12" cy="12" r="11" fill="#222" stroke-width="1.500" /><path d="M12 12q-5-3-3-8M12 12q5-3 8 2M12 12q0 6-6 6" stroke-width="2" /></svg></button>
      <button class="app" aria-label="OneNote"><svg width="24" height="24" viewBox="0 0 24 24"><path d="M6 1h18v22H6z" fill="#b96adb" /><path d="M18 1h6v7h-6z" fill="#9a4fd0" /><path d="M0 5h14v14H0z" fill="#7a1fa2" /><text x="7" y="16" text-anchor="middle" class="logo-text">N</text></svg></button>
      <button class="app" aria-label="Android Studio"><svg width="22" height="24" viewBox="0 0 22 24"><circle cx="11" cy="11" r="10.500" fill="#7cb342" /><path d="M11 6v4M11 9L5 23M11 9l6 14M7 17q4 3 8 0" fill="none" stroke="#e8f0e0" stroke-width="2" /><circle cx="11" cy="8" r="3" fill="#5b7a3a" /></svg></button>
      <button class="app" aria-label="Unity"><svg width="16" height="18" viewBox="0 0 16 18"><path d="M0 9L11 0l4 1 1 7-1 8-4 2z" fill="#fff" /><path d="M13 3L8 9l5 6M8 9H2" fill="none" stroke="#0a0f18" stroke-width="2" /></svg></button>
      <button class="app" aria-label="Excel"><svg width="24" height="24" viewBox="0 0 24 24"><path d="M12 4h11v16H12z" fill="#fff" stroke="#1e7145" /><path d="M13 8h9M13 12h9M13 16h9M18 4v16" stroke="#1e7145" /><path d="M0 3l14-3v24L0 21z" fill="#1e7145" /><text x="7" y="16" text-anchor="middle" class="logo-text">X</text></svg></button>
      <button class="app run current" aria-label="PowerPoint"><svg width="24" height="24" viewBox="0 0 24 24"><path d="M12 4h11v16H12z" fill="#fff" stroke="#d24726" /><circle cx="18" cy="10" r="3" fill="#d24726" /><path d="M15 15h6M15 17.500h6" stroke="#d24726" /><path d="M0 3l14-3v24L0 21z" fill="#d24726" /><text x="7" y="16" text-anchor="middle" class="logo-text">P</text></svg></button>
      <button class="app run" aria-label="Chrome"><svg width="24" height="24" viewBox="0 0 24 24"><circle cx="12" cy="12" r="11" fill="#fbc116" /><path d="M12 12L2 6.500A11 11 0 0 1 22 7H12z" fill="#e33b2e" /><path d="M2.400 6.500L8 16l4 7A11 11 0 0 1 2.400 6.500z" fill="#2da94f" /><circle cx="12" cy="12" r="5" fill="#fff" /><circle cx="12" cy="12" r="4" fill="#4285f4" /></svg></button>
      <button class="app" aria-label="반디캠"><svg width="22" height="24" viewBox="0 0 22 24" fill="#fff" stroke="#e01818" stroke-width="2"><path d="M1 1h20v9H1zM1 13h20v10H1z" /></svg></button>
      <button class="app run" aria-label="작업 관리자"><svg width="24" height="22" viewBox="0 0 24 22"><path d="M1 5l4-2v13l-4-1z" fill="#9aa4ad" /><path d="M5 1l18 1v14H5z" fill="#dfe6ec" stroke="#a8b0b8" /><path d="M8 12l2-5 2 6 2-8 2 7 2-3 2 4" fill="none" stroke="#3b7fc4" /><ellipse cx="15" cy="20" rx="5" ry="2" fill="#ccd2d8" /></svg></button>
      <button class="app run" aria-label="메모장"><svg width="22" height="22" viewBox="0 0 22 22"><path d="M7 1h14l-2 20-14-2z" fill="#dfeef4" /><path d="M6 1l12 1-5 18-13-2z" fill="#5fb0c8" /></svg></button>
      <button class="app run" aria-label="원격"><svg width="24" height="24" viewBox="0 0 24 24"><path d="M5 2h19v14H5z" fill="#2f9fee" /><path d="M11 17l6 6" stroke="#89939c" stroke-width="2.500" /><circle cx="6" cy="14" r="5" fill="#a9c3d6" stroke="#8fa0ad" /></svg></button>

      <div class="tray">
        <button class="people" aria-label="피플"><svg width="18" height="18" viewBox="0 0 18 18" fill="none" stroke="#fff"><circle cx="12" cy="4" r="3" /><path d="M8 12q1-5 4-5t4 5" /><circle cx="6" cy="9" r="2.500" /><path d="M2 17q1-5 4-5t4 5" /></svg></button>
        <button class="tight" aria-label="숨겨진 아이콘"><svg width="14" height="8" viewBox="0 0 14 8" fill="none" stroke="#fff" stroke-width="1.500"><path d="M1 7l6-6 6 6" /></svg></button>
        <button class="tight" aria-label="네트워크"><svg width="14" height="14" viewBox="0 0 14 14" fill="none" stroke="#ddd"><path d="M1 13Q2 2 13 1M4 13q1-8 9-9M7 13q1-5 6-6M10 13q0-3 3-3" /></svg></button>
        <button class="tight" aria-label="볼륨"><svg width="18" height="14" viewBox="0 0 18 14" fill="none" stroke="#fff"><path d="M1 5h3l4-4v12L4 9H1zM10 5q2 2 0 4M12 3q4 4 0 8M14 1q6 6 0 12" /></svg></button>
        <button aria-label="Windows Ink"><svg width="17" height="16" viewBox="0 0 17 16" fill="none" stroke="#fff"><path d="M5 11l7-10 3 2-7 9-4 1zM5 6Q0 8 1 12t7 2M11 8q5-2 5 2" /></svg></button>
        <button class="ime">A</button>
        <div class="clock"><span>오후 5:29</span><span>2019-05-07</span></div>
        <button class="action" aria-label="알림 센터"><svg width="18" height="18" viewBox="0 0 18 18"><path d="M1 1h16v12H8l-4 4v-4H1z" fill="#fff" /><path d="M4 4.500h10M4 7.500h10M4 10.500h6" stroke="#0a0f18" /><circle cx="13" cy="13" r="4" fill="#fff" stroke="#0a0f18" /><path d="M11 13h4" stroke="#0a0f18" /></svg></button>
      </div>
    </nav>
  </body>
</html>
```

FILE: styles.css
```css
* {
  box-sizing: border-box;
  margin: 0;
  padding: 0;
}

html,
body {
  height: 100%;
  overflow: hidden;
}

body {
  display: flex;
  flex-direction: column;
  font-family: "Noto Sans CJK KR", "Noto Sans", sans-serif;
  font-size: 13px;
  line-height: 16px;
  color: #333;
  background-color: #e6e6e6;
}

button {
  font: inherit;
  color: inherit;
  background: none;
  border: none;
  cursor: pointer;
  white-space: nowrap;
}

svg {
  display: block;
  flex-shrink: 0;
}

.defs {
  position: absolute;
}

/* small triangles */
.caret {
  display: inline-block;
  flex-shrink: 0;
  border: 3px solid transparent;
  border-top: 4px solid #666;
  border-bottom: 0;
  margin-left: 4px;
}
.caret.white {
  border-top-color: #fff;
}
.caret.wide {
  margin-left: 10px;
}

.tri {
  display: block;
  border: 4px solid transparent;
  border-top: 5px solid #666;
  border-bottom: 0;
}
.tri.up {
  border-top: 0;
  border-bottom: 5px solid #666;
}
.tri.left {
  border: 4px solid transparent;
  border-right: 5px solid #666;
  border-left: 0;
}
.tri.rightward {
  border: 4px solid transparent;
  border-left: 5px solid #666;
  border-right: 0;
}

/* title bar and tabs */
.titlebar {
  display: grid;
  grid-template-columns: 697px 76px 1fr;
  grid-template-rows: 34px 30px;
  flex-shrink: 0;
  color: #fff;
  background: radial-gradient(ellipse 56px 36px at right 438px top 18px, #ab4721 40%, transparent 100%),
    radial-gradient(ellipse 56px 40px at right 348px top 22px, #a5441f 50%, transparent 100%),
    radial-gradient(ellipse 100px 48px at right 210px top 12px, #a5441f 50%, transparent 100%),
    radial-gradient(ellipse 36px 22px at right 30px top 36px, #a8461f 40%, transparent 100%),
    linear-gradient(270deg, #b94c26 440px, transparent 520px),
    #c25228;
}

.quick-access {
  display: flex;
  align-items: center;
  padding: 0 0 2px 23px;
}
.autosave {
  display: flex;
  align-items: center;
  color: #dc7d58;
  margin-right: 15px;
}
.autosave-box {
  position: absolute;
  opacity: 0;
}
.autosave-switch {
  width: 38px;
  height: 16px;
  margin-left: 8px;
  padding-right: 5px;
  border: 1px solid #dc7d58;
  border-radius: 8px;
  font-size: 10px;
  line-height: 14px;
  text-align: right;
  background: radial-gradient(circle at 8px 7px, #dc7d58 3px, transparent 4px);
}
.qa-btn {
  display: flex;
  align-items: center;
  margin-right: 13px;
}
.qa-btn.dim {
  margin-left: -5px;
}

.context-title,
.context-tab {
  background-color: #9c4020;
  text-align: center;
}
.context-title {
  color: #f3c3a6;
  line-height: 30px;
}

.title-right,
.tabs-right {
  display: flex;
  align-items: center;
}
.title-right {
  padding: 0 17px 4px 154px;
}
.window-controls {
  display: flex;
  align-items: center;
  margin-left: auto;
}
.window-controls button {
  margin-left: 34px;
}
.window-controls .account + button {
  margin-left: 18px;
}

.tabs {
  display: flex;
  padding-left: 4px;
}
.tabs button {
  padding: 0 14px 2px 13px;
}
.tabs button.active {
  margin: 0 1px 0 6px;
  padding: 0 12px 2px;
  color: #c25228;
  background-color: #f3f3f3;
}
.context-tab {
  padding-bottom: 2px;
}
.tabs-right {
  padding: 0 15px 2px 14px;
}
.tell-me,
.share {
  display: flex;
  align-items: center;
  gap: 7px;
}
.share {
  margin-left: auto;
  margin-right: 22px;
}

/* ribbon */
.ribbon {
  display: flex;
  flex-shrink: 0;
  height: 94px;
  padding: 2px 0 1px;
  background-color: #f3f3f3;
  border-bottom: 1px solid #cfcfcf;
}
.group {
  display: flex;
  flex-direction: column;
  flex-shrink: 0;
  border-right: 1px solid #d8d8d8;
}
.g-clipboard {
  width: 144px;
}
.g-slides {
  width: 164px;
}
.g-font {
  width: 261px;
}
.g-paragraph {
  width: 299px;
}
.g-drawing {
  width: 341px;
}
.g-edit {
  width: 87px;
  padding-left: 6px;
}
.group-body {
  display: flex;
  height: 70px;
}
.group-foot {
  display: flex;
  align-items: center;
  height: 20px;
  padding-top: 3px;
}
.group-foot span {
  flex: 1;
  text-align: center;
}
.launcher {
  width: 8px;
  height: 8px;
  margin: 2px 4px 0 4px;
  border-top: 1px solid #777;
  border-left: 1px solid #777;
  background: linear-gradient(135deg, transparent 55%, #777 55%);
}

.big {
  display: flex;
  flex-direction: column;
  align-items: center;
  width: 59px;
  padding-top: 5px;
}
.big svg {
  margin-bottom: 1px;
}
.big > .caret {
  margin: 4px 0 0;
}
.g-slides .big {
  width: 74px;
}
.big.arrange {
  width: 40px;
  margin-left: 4px;
}
.big.arrange svg {
  margin-bottom: 5px;
}
.big.style {
  width: 52px;
}
.big.style .caret {
  margin-left: 3px;
  vertical-align: middle;
}

.small-col {
  display: flex;
  flex-direction: column;
}
.small {
  display: flex;
  align-items: center;
  height: 23px;
  padding-left: 1px;
}
.small svg {
  margin-right: 3px;
}
.small.off {
  color: #a9a9a9;
}
.small.off .caret {
  border-top-color: #a9a9a9;
}

.rows {
  display: flex;
  flex-direction: column;
  gap: 7px;
  padding: 8px 0 0 4px;
}
.tool-row {
  display: flex;
  align-items: center;
  height: 24px;
}
.g-paragraph .rows {
  width: 169px;
}
.font-name,
.font-size {
  height: 24px;
  padding: 0 3px;
  font: inherit;
  color: #444;
  border: 1px solid #bbb;
  border-radius: 0;
  appearance: none;
  background: linear-gradient(#666, #666) right 6px top 10px / 5px 1px no-repeat,
    linear-gradient(#666, #666) right 7px top 11px / 3px 1px no-repeat,
    linear-gradient(#666, #666) right 8px top 12px / 1px 1px no-repeat, #fff;
}
.font-name {
  width: 128px;
}
.font-size {
  width: 51px;
  margin: 0 1px 0 -1px;
}
.tool {
  display: flex;
  align-items: center;
  justify-content: center;
  width: 22px;
  height: 23px;
  color: #555;
}
.tool.split {
  width: 33px;
}
.tool.on {
  background-color: #c8c8c8;
}
.tool.sm {
  font-size: 11px;
}
.tool.xs {
  font-size: 9px;
}
.tool.bold {
  font-weight: 700;
}
.tool.italic {
  font-style: italic;
}
.tool.under {
  text-decoration: underline;
}
.tool.strike {
  text-decoration: line-through;
}
.tool.shadow {
  font-size: 15px;
  font-weight: 700;
  text-shadow: 1px 1px 1px #999;
}
.tip {
  align-self: flex-start;
  margin-top: 3px;
  border: 2px solid transparent;
}
.tip.up {
  border-top: 0;
  border-bottom: 3px solid #3b6db5;
}
.tip.down {
  border-bottom: 0;
  border-top: 3px solid #3b6db5;
}
.sep {
  width: 1px;
  height: 22px;
  margin: 0 4px;
  background-color: #d0d0d0;
}

.gallery {
  display: flex;
  width: 137px;
  height: 62px;
  margin: 4px 0 0 4px;
  border: 1px solid #ababab;
  background-color: #fff;
}
.gallery-scroll {
  display: flex;
  flex-direction: column;
  flex: 1;
  border-left: 1px solid #ababab;
}
.gallery-scroll button {
  display: flex;
  flex: 1;
  align-items: center;
  justify-content: center;
}
.gallery-scroll button + button {
  border-top: 1px solid #ababab;
}
.gallery-scroll button.off {
  background-color: #e2e2e2;
}
.gallery-scroll .tri {
  border-width: 4px 3px 0;
}
.gallery-scroll .tri.up {
  border-width: 0 3px 4px;
  border-bottom-color: #bbb;
}
.gallery-scroll .tri.more {
  padding-top: 2px;
  border-width: 4px 3px 0;
  background: linear-gradient(#666, #666) top / 100% 1px no-repeat;
}
.collapse {
  margin: auto 10px 5px auto;
}

/* workspace */
.workspace {
  display: flex;
  flex: 1;
  min-height: 0;
}
.thumb-panel {
  display: flex;
  flex-shrink: 0;
  width: 310px;
  padding-bottom: 2px;
  border-right: 1px solid #bdbdbd;
}
.thumbs {
  display: flex;
  flex: 1;
  flex-direction: column;
  justify-content: flex-end;
  gap: 19px;
  padding: 0 0 28px 12px;
  list-style: none;
  overflow: hidden;
}
.thumbs li {
  display: flex;
  gap: 13px;
}
.num {
  width: 9px;
  font-size: 16px;
  line-height: 12px;
  color: #444;
}
.thumb {
  width: 238px;
  height: 134px;
  border: 1px solid #bbb;
  background-color: #fff;
}
.selected .num {
  color: #d0502f;
}
.selected .thumb {
  border-color: #fff;
  outline: 2px solid #ea7f5a;
}
.th-text {
  font-size: 28px;
  text-anchor: middle;
  fill: #fff;
}
.th-code {
  font-size: 26px;
  font-weight: 700;
}

.vscroll {
  display: flex;
  flex-direction: column;
  width: 15px;
  margin: 2px 4px 0 0;
  background-color: #dadada;
}
.vscroll button {
  display: flex;
  align-items: center;
  justify-content: center;
  height: 15px;
  border: 1px solid #ababab;
  background-color: #fff;
}
.vscroll .track-gap {
  flex: 182;
}
.vscroll .bar {
  flex: 644;
  border: 1px solid #ababab;
  background-color: #fff;
}

.editor {
  display: grid;
  flex: 1;
  min-width: 0;
  grid-template-columns: 1fr 18px;
  grid-template-rows: 1fr 15px;
  padding: 0 0 5px 3px;
  border-bottom: 1px solid #bdbdbd;
  margin-bottom: 2px;
}
.stage {
  display: flex;
  justify-content: center;
  padding-top: 16px;
  overflow: hidden;
}
.vscroll.right {
  margin-left: 2px;
  margin-right: 1px;
}
.vscroll.right .track-gap {
  flex: 660;
}
.vscroll.right .bar {
  flex: 109;
}
.vscroll button.jump {
  flex-direction: column;
  height: 18px;
  border: none;
  background-color: #e6e6e6;
}
.hscroll {
  display: flex;
  border: 1px solid #ababab;
  background-color: #fff;
}
.hscroll .bar {
  flex: 1;
  border: 1px solid #ababab;
  border-width: 0 1px;
}
.hscroll button {
  display: flex;
  align-items: center;
  justify-content: center;
  width: 15px;
}

/* slide canvas */
.slide {
  position: relative;
  flex-shrink: 0;
  width: 1429px;
  height: 804px;
  border: 1px solid #c4c4c4;
  background-color: #fff;
  font-size: 29px;
  font-weight: 300;
  line-height: 32px;
  color: #fff;
}
.shape {
  position: absolute;
  border: 1px solid #2f528f;
  text-align: center;
  white-space: nowrap;
}
.program {
  left: 30px;
  top: 13px;
  width: 1378px;
  height: 763px;
  background-color: #fb842d;
  border-color: #ae5a21;
}
.program-name {
  height: 34px;
  font-size: 29px;
  font-weight: 300;
  line-height: 28px;
  border-bottom: 1px solid #c05f1c;
}
.code-area {
  left: 53px;
  top: 64px;
  width: 1333px;
  height: 140px;
  padding-top: 2px;
  background-color: #4071c8;
}
.const {
  top: 147px;
  width: 137px;
  height: 42px;
  font-size: 26px;
  line-height: 38px;
  background-color: #ffb900;
  border-color: #bc8c00;
}
.const-a {
  left: 66px;
}
.const-b {
  left: 219px;
}
.class-box {
  left: 373px;
  top: 146px;
  width: 606px;
  height: 43px;
  padding: 3px 9px;
  background-color: #fff;
  border-color: #8db4e2;
}
.data-area {
  left: 53px;
  top: 227px;
  width: 1333px;
  height: 91px;
  line-height: 84px;
  background-color: #6ca244;
  border-color: #507e32;
}
.heap-area {
  left: 53px;
  top: 331px;
  width: 1333px;
  height: 206px;
  background-color: #743ca3;
  border-color: #5a5590;
}
.stack-area {
  left: 53px;
  top: 549px;
  width: 1333px;
  height: 216px;
  background-color: #8eaadc;
  border-color: #41719c;
}

/* half-width latin next to full-width hangul */
.code {
  font-family: "DejaVu Sans Mono", "Noto Sans CJK KR", monospace;
  font-size: 22px;
  text-align: left;
  color: #000;
}
.code p {
  height: 32px;
}
/* keeps latin-only lines on the same baseline as the mixed ones */
.code p::before {
  content: "\200b";
}
.ko,
.code p::before {
  font-family: "Noto Sans CJK KR", sans-serif;
  font-size: 29px;
  vertical-align: -3px;
}
.code .value {
  font-family: "Noto Sans CJK KR", sans-serif;
  font-size: 29px;
  font-weight: 400;
}
.code .kw,
.code p.kw {
  color: #1414d8;
}
.class-box.code {
  color: #3a84a4;
}
.object,
.var {
  height: 143px;
  background-color: #fff;
}
.object {
  top: 376px;
  width: 511px;
  padding: 5px 11px;
  border-color: #e09060;
}
.object-player {
  left: 64px;
}
.object-monster {
  left: 612px;
}
.var {
  width: 398px;
  padding: 6px 10px;
  border-color: #d9b84a;
}
.var-att {
  left: 72px;
  top: 613px;
}
.var-player {
  left: 563px;
  top: 615px;
}
.var-monster {
  left: 978px;
  top: 615px;
}
.field {
  width: 198px;
  height: 34px;
  padding-left: 10px;
  line-height: 28px;
  background-color: #4071c8;
}
.at {
  top: 480px;
}
.hp {
  top: 482px;
}
.player-at {
  left: 132px;
}
.player-hp {
  left: 348px;
}
.monster-at {
  left: 680px;
}
.monster-hp {
  left: 896px;
}
.frame {
  height: 207px;
  padding-top: 4px;
  background-color: #4071c8;
}
.frame-att {
  left: 72px;
  top: 562px;
  width: 402px;
  font-size: 26px;
}
.frame-main {
  left: 534px;
  top: 558px;
  width: 852px;
}
.misspelt {
  text-decoration: underline wavy #e04848 1px;
  text-underline-offset: 4px;
}
.arrows {
  position: absolute;
  left: 0;
  top: 0;
}
.selection {
  position: absolute;
  left: -12px;
  top: -54px;
}

/* status bar */
.statusbar {
  display: flex;
  align-items: center;
  flex-shrink: 0;
  height: 22px;
  padding: 0 0 2px 8px;
  color: #444;
  background-color: #f3f3f3;
  border-top: 1px solid #c6c6c6;
}
.st-proof {
  margin: 0 17px 0 19px;
}
.st-right {
  display: flex;
  align-items: center;
  margin-left: auto;
  padding-right: 6px;
}
.notes {
  display: flex;
  align-items: center;
  gap: 4px;
  margin-right: 20px;
}
.view {
  display: flex;
  align-items: center;
  justify-content: center;
  width: 38px;
  height: 21px;
}
.view.on {
  background-color: #c8c8c8;
}
.zoom-step {
  width: 14px;
  font-size: 16px;
  font-weight: 700;
}
.zoom {
  width: 100px;
  height: 20px;
  appearance: none;
  background: linear-gradient(#999, #999) center / 100% 1px no-repeat;
}
.zoom::-webkit-slider-thumb {
  appearance: none;
  width: 5px;
  height: 12px;
  background-color: #666;
}
.zoom-value {
  margin: 0 12px 0 7px;
}

/* taskbar */
.taskbar {
  display: flex;
  flex-shrink: 0;
  height: 40px;
  color: #fff;
  background-color: #060b14;
}
.sys,
.app {
  display: flex;
  align-items: center;
  justify-content: center;
  width: 48px;
}
.app {
  width: 49px;
}
.app.first {
  margin-left: 2px;
}
.app.run {
  background: linear-gradient(#76b0e5, #76b0e5) bottom / 40px 2px no-repeat;
}
.app.current {
  background: linear-gradient(#76b0e5, #76b0e5) bottom / 100% 2px no-repeat, #363d45;
}
.app.talk {
  background-color: #a55a20;
  border-bottom: 2px solid #f57c14;
}
.ps {
  width: 22px;
  height: 24px;
  font-size: 13px;
  font-weight: 700;
  line-height: 21px;
  color: #8fc3f5;
  background-color: #0a0a50;
  border: 1px solid #7ab4ee;
}
.talk-text {
  font-size: 6px;
  font-weight: 700;
  fill: #fadc00;
}
.logo-text {
  font-size: 12px;
  font-weight: 700;
  fill: #fff;
}
.tray {
  display: flex;
  align-items: center;
  margin-left: auto;
  padding-right: 7px;
}
.tray button {
  display: flex;
  align-items: center;
  justify-content: center;
  width: 28px;
}
.tray .people {
  width: 46px;
}
.tray button.tight {
  width: 25px;
}
.tray .ime {
  width: 26px;
  font-size: 18px;
}
.clock {
  display: flex;
  flex-direction: column;
  width: 76px;
  font-size: 12px;
  line-height: 18px;
  text-align: center;
}
.tray .action {
  width: 46px;
  height: 40px;
  padding-right: 6px;
}
```
